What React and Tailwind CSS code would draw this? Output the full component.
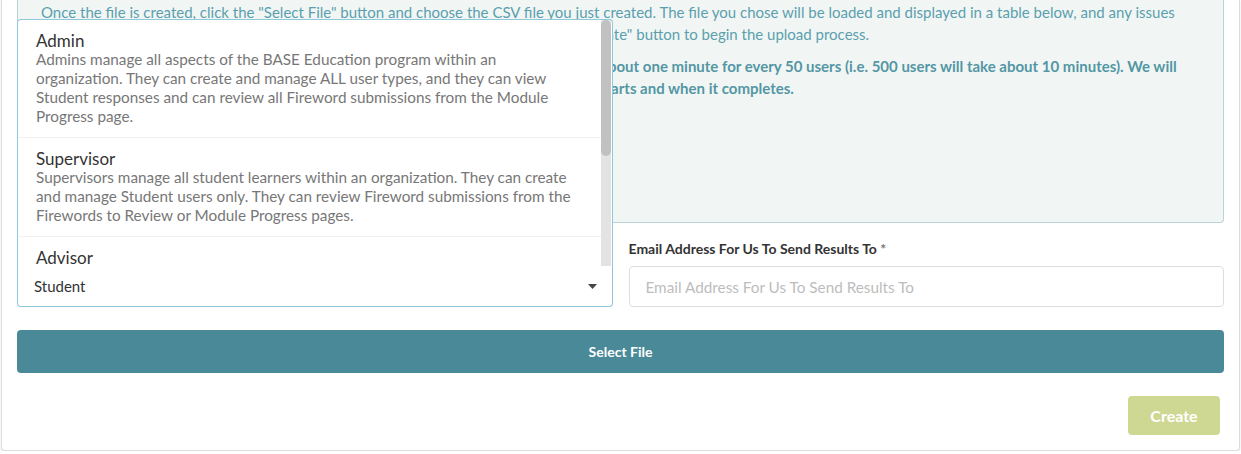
import { useState } from 'react'

const ROLES = [
  {
    name: 'Admin',
    lines: [
      'Admins manage all aspects of the BASE Education program within an',
      'organization. They can create and manage ALL user types, and they can view',
      'Student responses and can review all Fireword submissions from the Module',
      'Progress page.',
    ],
  },
  {
    name: 'Supervisor',
    lines: [
      'Supervisors manage all student learners within an organization. They can create',
      'and manage Student users only. They can review Fireword submissions from the',
      'Firewords to Review or Module Progress pages.',
    ],
  },
  {
    name: 'Advisor',
    lines: ['Advisors work with the student learners assigned to them.'],
  },
  {
    name: 'Student',
    lines: ['Students complete the modules assigned to them.'],
  },
]

function RoleSelect() {
  const [value] = useState('Student')
  return (
    <div className="relative h-[41px] rounded-b border-x border-b border-[#8ec8da] bg-white">
      {/* open menu sits on top of the label and info box */}
      <div className="absolute bottom-full left-[-1px] right-[-1px] h-[247px] rounded-t border-x border-t border-[#8ec8da] bg-white flex overflow-hidden">
        <div className="flex-1 overflow-hidden">
          {ROLES.map((r) => (
            <div key={r.name} className="border-b border-[#f0f0f0] px-[18px] pt-[12px] pb-[11px]">
              <div className="text-[17px] leading-[18px] text-[#333]">{r.name}</div>
              <div className="text-[15.3px] leading-[19px] text-[#777]">
                {r.lines.map((l, i) => (
                  <div key={i}>{l}</div>
                ))}
              </div>
            </div>
          ))}
        </div>
        <div className="w-[10px] bg-[#e3e3e3] mr-px">
          <div className="h-[136px] rounded-full bg-[#c1c1c1]" />
        </div>
      </div>
      <div className="flex h-full items-center justify-between pl-4 pr-[15px] text-[15px] text-[#333]">
        <span>{value}</span>
        <svg width="9" height="5" viewBox="0 0 9 5" className="text-[#444]">
          <path d="M0 0h9L4.5 5z" fill="currentColor" />
        </svg>
      </div>
    </div>
  )
}

export default function App() {
  return (
    <div className="bg-white" style={{ fontFamily: 'Lato, "Noto Sans", sans-serif' }}>
      <div className="mx-px rounded-b border-x border-b border-[#dcdcdc] px-[15px] pb-[15px] shadow-[0_1px_2px_rgba(0,0,0,0.12)]">
        <div className="h-[223px] rounded-b border-x border-b border-[#b9d4d8] bg-[#f1f6f5] pl-[23px] pr-[24px] pt-px text-[15px] leading-[22px] text-[#5b9fad]">
          <p>
            Once the file is created, click the "Select File" button and choose the CSV file you just created. The file
            you chose will be loaded and displayed in a table below, and any issues with the data in the file will be
            highlighted. If everything appears correct, click the "Create" button to begin the upload process.
          </p>
          <p className="mt-[10px] font-bold text-[#5496a4]">
            Please note that the upload process may take quite some time to complete. It'll take about one minute for
            every 50 users (i.e. 500 users will take about 10 minutes). We will send an email to the address provided
            below to notify you when the upload process starts and when it completes.
          </p>
        </div>

        <div className="mt-[17px] grid grid-cols-2 gap-4">
          <div>
            <label className="mb-2 block text-[14px] font-bold leading-[18px] text-[#333]">
              Role <span className="text-[#777]">*</span>
            </label>
            <RoleSelect />
          </div>
          <div>
            <label className="mb-2 block text-[14px] font-bold leading-[18px] text-[#333]">
              Email Address For Us To Send Results To <span className="text-[#777]">*</span>
            </label>
            <input
              type="email"
              placeholder="Email Address For Us To Send Results To"
              className="h-[41px] w-full rounded border border-[#dedede] bg-white px-4 text-[15.3px] text-[#333] outline-none placeholder:text-[#bdbdbd]"
            />
          </div>
        </div>

        <button className="mt-[23px] flex h-[43px] w-full items-center justify-center rounded bg-[#4a8a98] text-[14px] font-bold text-white">
          Select File
        </button>

        <div className="mt-[23px] flex justify-end pr-1">
          <button className="h-[39px] w-[92px] rounded bg-[#cfd893] text-[16px] font-bold text-white">Create</button>
        </div>
      </div>
    </div>
  )
}
